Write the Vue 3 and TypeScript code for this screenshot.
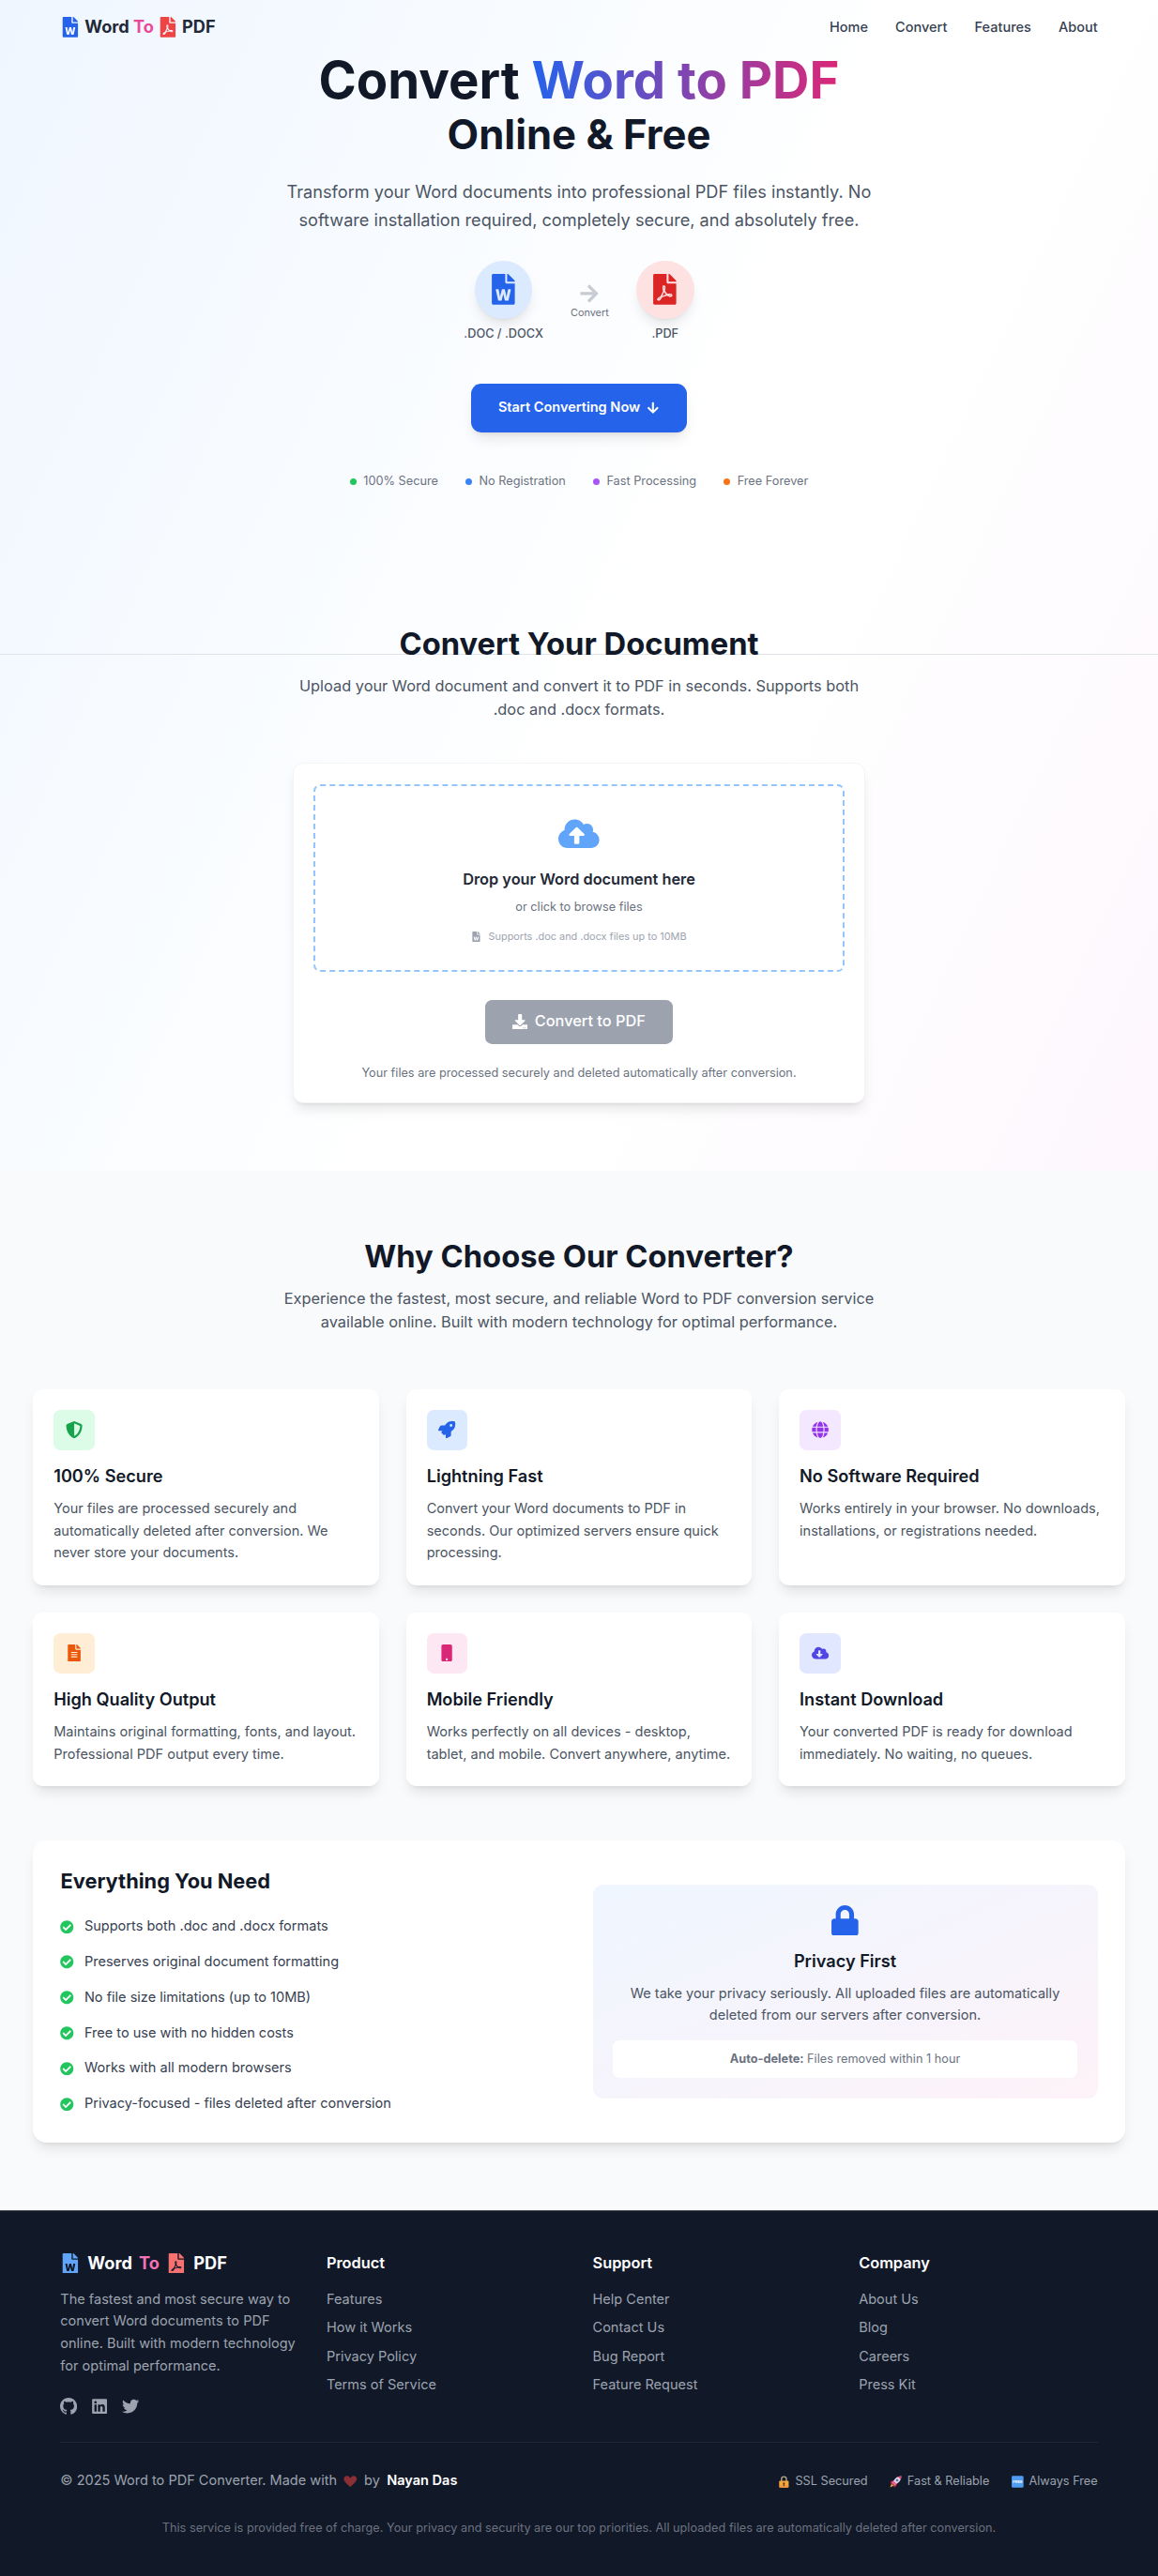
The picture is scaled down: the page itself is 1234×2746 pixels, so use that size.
<script setup lang="ts">
interface Glyph {
  box: string
  d: string
}

interface Feature {
  icon: string
  tone: string
  title: string
  text: string
}

interface LinkGroup {
  title: string
  links: string[]
}

const cloud =
  'M537.6 226.6c4.1-10.7 6.4-22.4 6.4-34.6 0-53-43-96-96-96-19.7 0-38.1 6-53.3 16.2C367 64.2 315.3 32 256 32c-88.4 0-160 71.6-160 160 0 2.7.1 5.4.2 8.1C40.2 219.8 0 273.2 0 336c0 79.5 64.5 144 144 144h368c70.7 0 128-57.3 128-128 0-61.9-44-113.6-102.4-125.4z'

const icons: Record<string, Glyph> = {
  word: {
    box: '0 0 384 512',
    d: 'M224 136V0H24C10.7 0 0 10.7 0 24v464c0 13.3 10.7 24 24 24h336c13.3 0 24-10.7 24-24V160H248c-13.2 0-24-10.8-24-24zm57.1 120H305c7.7 0 13.4 7.1 11.7 14.7l-38 168c-1.2 5.5-6.1 9.3-11.7 9.3h-38c-5.5 0-10.3-3.8-11.6-9.1-25.8-103.5-20.8-81.2-25.6-110.5h-.5c-1.1 14.3-2.4 17.4-25.6 110.5-1.3 5.3-6.1 9.1-11.6 9.1H117c-5.6 0-10.5-3.9-11.7-9.4l-37.8-168c-1.7-7.5 4-14.6 11.7-14.6h24.5c5.7 0 10.7 4 11.8 9.7 15.6 78 20.1 109.5 21 122.2 1.6-10.2 7.3-32.7 29.4-122.7 1.3-5.4 6.1-9.1 11.7-9.1h29.1c5.6 0 10.4 3.8 11.7 9.2 24 100.4 28.8 124 29.6 129.4-.2-11.2-2.6-17.8 21.6-129.2 1-5.6 5.9-9.5 11.5-9.5zM384 121.9v6.1H256V0h6.1c6.4 0 12.5 2.5 17 7l97.9 98c4.5 4.5 7 10.6 7 16.9z',
  },
  pdf: {
    box: '0 0 384 512',
    d: 'M181.9 256.1c-5-16-4.9-46.9-2-46.9 8.4 0 7.6 36.9 2 46.9zm-1.7 47.2c-7.7 20.2-17.3 43.3-28.4 62.7 18.3-7 39-17.2 62.9-21.9-12.7-9.6-24.9-23.4-34.5-40.8zM86.1 428.1c0 .8 13.2-5.4 34.9-40.2-6.7 6.3-29.1 24.5-34.9 40.2zM248 160h136v328c0 13.3-10.7 24-24 24H24c-13.3 0-24-10.7-24-24V24C0 10.7 10.7 0 24 0h200v136c0 13.2 10.8 24 24 24zm-8 171.8c-20-12.2-33.3-29-42.7-53.8 4.5-18.5 11.6-46.6 6.2-64.2-4.7-29.4-42.4-26.5-47.8-6.8-5 18.3-.4 44.1 8.1 77-11.6 27.6-28.7 64.6-40.8 85.8-.1 0-.1.1-.2.1-27.1 13.9-73.6 44.5-54.5 68 5.6 6.9 16 10 21.5 10 17.9 0 35.7-18 61.1-61.8 25.8-8.5 54.1-19.1 79-23.2 21.7 11.8 47.1 19.5 64 19.5 29.2 0 31.2-32 19.7-43.4-13.9-13.6-54.3-9.7-73.6-7.2zM377 105L279 7c-4.5-4.5-10.6-7-17-7h-6v128h128v-6.1c0-6.3-2.5-12.4-7-16.9zm-74.1 255.3c4.1-2.7-2.5-11.9-42.8-9 37.1 15.8 42.8 9 42.8 9z',
  },
  arrowRight: {
    box: '0 0 448 512',
    d: 'M190.5 66.9l22.2-22.2c9.4-9.4 24.6-9.4 33.9 0L441 239c9.4 9.4 9.4 24.6 0 33.9L246.6 467.3c-9.4 9.4-24.6 9.4-33.9 0l-22.2-22.2c-9.5-9.5-9.3-25 .4-34.3L311.4 296H24c-13.3 0-24-10.7-24-24v-32c0-13.3 10.7-24 24-24h287.4L190.9 101.2c-9.8-9.3-10-24.8-.4-34.3z',
  },
  arrowDown: {
    box: '0 0 448 512',
    d: 'M413.1 222.5l22.2 22.2c9.4 9.4 9.4 24.6 0 33.9L241 473c-9.4 9.4-24.6 9.4-33.9 0L12.7 278.6c-9.4-9.4-9.4-24.6 0-33.9l22.2-22.2c9.5-9.5 25-9.3 34.3.4L184 343.4V56c0-13.3 10.7-24 24-24h32c13.3 0 24 10.7 24 24v287.4l114.8-120.5c9.3-9.8 24.8-10 34.3-.4z',
  },
  cloudUp: {
    box: '0 0 640 512',
    d: cloud + 'M393.4 288H328v112c0 8.8-7.2 16-16 16h-48c-8.8 0-16-7.2-16-16V288h-65.4c-14.3 0-21.4-17.2-11.3-27.3l105.4-105.4c6.2-6.2 16.4-6.2 22.6 0l105.4 105.4c10.1 10.1 2.9 27.3-11.3 27.3z',
  },
  cloudDown: {
    box: '0 0 640 512',
    d: cloud + 'm-132.9 88.7L299.3 420.7c-6.2 6.2-16.4 6.2-22.6 0L171.3 315.3c-10.1-10.1-2.9-27.3 11.3-27.3H248V176c0-8.8 7.2-16 16-16h48c8.8 0 16 7.2 16 16v112h65.4c14.2 0 21.4 17.2 11.3 27.3z',
  },
  download: {
    box: '0 0 512 512',
    d: 'M216 0h80c13.3 0 24 10.7 24 24v168h87.7c17.8 0 26.7 21.5 14.1 34.1L269.7 378.3c-7.5 7.5-19.8 7.5-27.3 0L90.1 226.1c-12.6-12.6-3.7-34.1 14.1-34.1H192V24c0-13.3 10.7-24 24-24zm296 376v112c0 13.3-10.7 24-24 24H24c-13.3 0-24-10.7-24-24V376c0-13.3 10.7-24 24-24h146.7l49 49c20.1 20.1 52.5 20.1 72.6 0l49-49H488c13.3 0 24 10.7 24 24zm-124 88c0-11-9-20-20-20s-20 9-20 20 9 20 20 20 20-9 20-20zm64 0c0-11-9-20-20-20s-20 9-20 20 9 20 20 20 20-9 20-20z',
  },
  shield: {
    box: '0 0 512 512',
    d: 'M466.5 83.7l-192-80a48.15 48.15 0 0 0-36.9 0l-192 80C27.7 91.1 16 108.6 16 128c0 198.5 114.5 335.7 221.5 380.3 11.8 4.9 25.1 4.9 36.9 0C360.1 472.6 496 349.3 496 128c0-19.4-11.7-36.9-29.5-44.3zM256.1 446.3l-.1-381 175.9 73.3c-3.3 151.4-82.1 261.1-175.8 307.7z',
  },
  rocket: {
    box: '0 0 512 512',
    d: 'M505.12019,19.09375c-1.18945-5.53125-6.65819-11-12.207-12.1875C460.716,0,435.507,0,410.40747,0,307.17523,0,245.26909,55.20312,199.05238,128H94.83772c-16.34763.01562-35.55658,11.875-42.88664,26.48438L2.51562,253.29688A28.4,28.4,0,0,0,0,264a24.00867,24.00867,0,0,0,24.00582,24H127.81618l-22.47457,22.46875c-11.36521,11.36133-12.99607,32.25781,0,45.25L156.24582,406.625c11.15623,11.1875,32.15619,13.15625,45.27726,0l22.47457-22.46875V488a24.00867,24.00867,0,0,0,24.00581,24,28.55934,28.55934,0,0,0,10.707-2.51562l98.72834-49.39063c14.62888-7.29687,26.50776-26.5,26.50776-42.85937V312.79688c72.59753-46.3125,128.03493-108.40626,128.03493-211.09376C512.07526,76.5,512.07526,51.29688,505.12019,19.09375ZM384.04033,168A40,40,0,1,1,424.05,128,40.02322,40.02322,0,0,1,384.04033,168Z',
  },
  globe: {
    box: '0 0 496 512',
    d: 'M336.5 160C322 70.7 287.8 8 248 8s-74 62.7-88.5 152h177zM152 256c0 22.2 1.2 43.5 3.3 64h185.3c2.1-20.5 3.3-41.8 3.3-64s-1.2-43.5-3.3-64H155.3c-2.1 20.5-3.3 41.8-3.3 64zm324.7-96c-28.6-67.9-86.5-120.4-158-141.6 24.4 33.8 41.2 84.7 50 141.6h108zM177.2 18.4C105.8 39.6 47.8 92.1 19.3 160h108c8.7-56.9 25.5-107.8 49.9-141.6zM487.4 192H372.7c2.1 21 3.3 42.5 3.3 64s-1.2 43-3.3 64h114.6c5.5-20.5 8.6-41.8 8.6-64s-3.1-43.5-8.5-64zM120 256c0-21.5 1.2-43 3.3-64H8.6C3.2 212.5 0 233.8 0 256s3.2 43.5 8.6 64h114.6c-2-21-3.2-42.5-3.2-64zm39.5 96c14.5 89.3 48.7 152 88.5 152s74-62.7 88.5-152h-177zm159.3 141.6c71.4-21.2 129.4-73.7 158-141.6h-108c-8.8 56.9-25.6 107.8-50 141.6zM19.3 352c28.6 67.9 86.5 120.4 158 141.6-24.4-33.8-41.2-84.7-50-141.6h-108z',
  },
  file: {
    box: '0 0 384 512',
    d: 'M224 136V0H24C10.7 0 0 10.7 0 24v464c0 13.3 10.7 24 24 24h336c13.3 0 24-10.7 24-24V160H248c-13.2 0-24-10.8-24-24zm64 236c0 6.6-5.4 12-12 12H108c-6.6 0-12-5.4-12-12v-8c0-6.6 5.4-12 12-12h168c6.6 0 12 5.4 12 12v8zm0-64c0 6.6-5.4 12-12 12H108c-6.6 0-12-5.4-12-12v-8c0-6.6 5.4-12 12-12h168c6.6 0 12 5.4 12 12v8zm0-72v8c0 6.6-5.4 12-12 12H108c-6.6 0-12-5.4-12-12v-8c0-6.6 5.4-12 12-12h168c6.6 0 12 5.4 12 12zm96-114.1v6.1H256V0h6.1c6.4 0 12.5 2.5 17 7l97.9 98c4.5 4.5 7 10.6 7 16.9z',
  },
  mobile: {
    box: '0 0 320 512',
    d: 'M272 0H48C21.5 0 0 21.5 0 48v416c0 26.5 21.5 48 48 48h224c26.5 0 48-21.5 48-48V48c0-26.5-21.5-48-48-48zM160 480c-17.7 0-32-14.3-32-32s14.3-32 32-32 32 14.3 32 32-14.3 32-32 32z',
  },
  check: {
    box: '0 0 512 512',
    d: 'M504 256c0 136.967-111.033 248-248 248S8 392.967 8 256 119.033 8 256 8s248 111.033 248 248zM227.314 387.314l184-184c6.248-6.248 6.248-16.379 0-22.627l-22.627-22.627c-6.248-6.249-16.379-6.249-22.628 0L216 308.118l-70.059-70.059c-6.248-6.248-16.379-6.248-22.628 0l-22.627 22.627c-6.248 6.248-6.248 16.379 0 22.627l104 104c6.249 6.249 16.379 6.249 22.628.001z',
  },
  lock: {
    box: '0 0 448 512',
    d: 'M400 224h-24v-72C376 68.2 307.8 0 224 0S72 68.2 72 152v72H48c-26.5 0-48 21.5-48 48v192c0 26.5 21.5 48 48 48h352c26.5 0 48-21.5 48-48V272c0-26.5-21.5-48-48-48zm-104 0H152v-72c0-39.7 32.3-72 72-72s72 32.3 72 72v72z',
  },
  github: {
    box: '0 0 16 16',
    d: 'M8 0C3.58 0 0 3.58 0 8c0 3.54 2.29 6.53 5.47 7.59.4.07.55-.17.55-.38 0-.19-.01-.82-.01-1.49-2.01.37-2.53-.49-2.69-.94-.09-.23-.48-.94-.82-1.13-.28-.15-.68-.52-.01-.53.63-.01 1.08.58 1.23.82.72 1.21 1.87.87 2.33.66.07-.52.28-.87.51-1.07-1.78-.2-3.64-.89-3.64-3.95 0-.87.31-1.59.82-2.15-.08-.2-.36-1.02.08-2.12 0 0 .67-.21 2.2.82.64-.18 1.32-.27 2-.27.68 0 1.36.09 2 .27 1.53-1.04 2.2-.82 2.2-.82.44 1.1.16 1.92.08 2.12.51.56.82 1.27.82 2.15 0 3.07-1.87 3.75-3.65 3.95.29.25.54.73.54 1.48 0 1.07-.01 1.93-.01 2.2 0 .21.15.46.55.38A8.013 8.013 0 0 0 16 8c0-4.42-3.58-8-8-8z',
  },
  linkedin: {
    box: '0 0 448 512',
    d: 'M416 32H31.9C14.3 32 0 46.5 0 64.3v383.4C0 465.5 14.3 480 31.9 480H416c17.6 0 32-14.5 32-32.3V64.3c0-17.8-14.4-32.3-32-32.3zM135.4 416H69V202.2h66.5V416zm-33.2-243c-21.3 0-38.5-17.3-38.5-38.5S80.9 96 102.2 96c21.2 0 38.5 17.3 38.5 38.5 0 21.3-17.2 38.5-38.5 38.5zm282.1 243h-66.4V312c0-24.8-.5-56.7-34.5-56.7-34.6 0-39.9 27-39.9 54.9V416h-66.4V202.2h63.7v29.2h.9c8.9-16.8 30.6-34.5 62.9-34.5 67.2 0 79.7 44.3 79.7 101.9V416z',
  },
  twitter: {
    box: '0 0 512 512',
    d: 'M459.37 151.716c.325 4.548.325 9.097.325 13.645 0 138.72-105.583 298.558-298.558 298.558-59.452 0-114.68-17.219-161.137-47.106 8.447.974 16.568 1.299 25.34 1.299 49.055 0 94.213-16.568 130.274-44.832-46.132-.975-84.792-31.188-98.112-72.772 6.498.974 12.995 1.624 19.818 1.624 9.421 0 18.843-1.3 27.614-3.573-48.081-9.747-84.143-51.98-84.143-102.985v-1.299c13.969 7.797 30.214 12.67 47.431 13.319-28.264-18.843-46.781-51.005-46.781-87.391 0-19.492 5.197-37.36 14.294-52.954 51.655 63.675 129.3 105.258 216.365 109.807-1.624-7.797-2.599-15.918-2.599-24.04 0-57.828 46.782-104.934 104.934-104.934 30.213 0 57.502 12.67 76.67 33.137 23.715-4.548 46.456-13.32 66.599-25.34-7.798 24.366-24.366 44.833-46.132 57.827 21.117-2.273 41.584-8.122 60.426-16.243-14.292 20.791-32.161 39.308-52.628 54.253z',
  },
}

const nav: string[] = ['Home', 'Convert', 'Features', 'About']

const perks = [
  { label: '100% Secure', tone: 'green' },
  { label: 'No Registration', tone: 'blue' },
  { label: 'Fast Processing', tone: 'purple' },
  { label: 'Free Forever', tone: 'orange' },
]

const features: Feature[] = [
  { icon: 'shield', tone: 'green', title: '100% Secure', text: 'Your files are processed securely and automatically deleted after conversion. We never store your documents.' },
  { icon: 'rocket', tone: 'blue', title: 'Lightning Fast', text: 'Convert your Word documents to PDF in seconds. Our optimized servers ensure quick processing.' },
  { icon: 'globe', tone: 'purple', title: 'No Software Required', text: 'Works entirely in your browser. No downloads, installations, or registrations needed.' },
  { icon: 'file', tone: 'orange', title: 'High Quality Output', text: 'Maintains original formatting, fonts, and layout. Professional PDF output every time.' },
  { icon: 'mobile', tone: 'pink', title: 'Mobile Friendly', text: 'Works perfectly on all devices - desktop, tablet, and mobile. Convert anywhere, anytime.' },
  { icon: 'cloudDown', tone: 'indigo', title: 'Instant Download', text: 'Your converted PDF is ready for download immediately. No waiting, no queues.' },
]

const checklist: string[] = [
  'Supports both .doc and .docx formats',
  'Preserves original document formatting',
  'No file size limitations (up to 10MB)',
  'Free to use with no hidden costs',
  'Works with all modern browsers',
  'Privacy-focused - files deleted after conversion',
]

const groups: LinkGroup[] = [
  { title: 'Product', links: ['Features', 'How it Works', 'Privacy Policy', 'Terms of Service'] },
  { title: 'Support', links: ['Help Center', 'Contact Us', 'Bug Report', 'Feature Request'] },
  { title: 'Company', links: ['About Us', 'Blog', 'Careers', 'Press Kit'] },
]

const socials: string[] = ['github', 'linkedin', 'twitter']
</script>

<template>
  <div class="page">
    <div class="top">
      <div class="fold" aria-hidden="true"></div>

      <header class="nav">
        <div class="logo">
          <svg class="ico c-blue" :viewBox="icons.word.box"><path :d="icons.word.d" /></svg>
          <span>Word</span>
          <span class="c-pink">To</span>
          <svg class="ico c-red" :viewBox="icons.pdf.box"><path :d="icons.pdf.d" /></svg>
          <span>PDF</span>
        </div>
        <nav class="menu">
          <a v-for="item in nav" :key="item">{{ item }}</a>
        </nav>
      </header>

      <section class="hero">
        <h1>Convert <span class="grad">Word to PDF</span><span class="sub">Online &amp; Free</span></h1>
        <p class="lead">Transform your Word documents into professional PDF files instantly. No software installation required, completely secure, and absolutely free.</p>

        <div class="flow">
          <div class="stage">
            <div class="disc disc-word"><svg class="ico" :viewBox="icons.word.box"><path :d="icons.word.d" /></svg></div>
            <span class="stage-label">.DOC / .DOCX</span>
          </div>
          <div class="step">
            <svg class="ico" :viewBox="icons.arrowRight.box"><path :d="icons.arrowRight.d" /></svg>
            <span>Convert</span>
          </div>
          <div class="stage">
            <div class="disc disc-pdf"><svg class="ico" :viewBox="icons.pdf.box"><path :d="icons.pdf.d" /></svg></div>
            <span class="stage-label">.PDF</span>
          </div>
        </div>

        <button class="cta">
          Start Converting Now
          <svg class="ico" :viewBox="icons.arrowDown.box"><path :d="icons.arrowDown.d" /></svg>
        </button>

        <ul class="perks">
          <li v-for="p in perks" :key="p.label"><i :class="['dot', 'dot-' + p.tone]"></i>{{ p.label }}</li>
        </ul>
      </section>

      <section class="convert">
        <h2>Convert Your Document</h2>
        <p class="intro">Upload your Word document and convert it to PDF in seconds. Supports both .doc and .docx formats.</p>
        <div class="uploader">
          <div class="drop">
            <svg class="ico drop-cloud" :viewBox="icons.cloudUp.box"><path :d="icons.cloudUp.d" /></svg>
            <h3>Drop your Word document here</h3>
            <p class="browse">or click to browse files</p>
            <p class="limits">
              <svg class="ico" :viewBox="icons.word.box"><path :d="icons.word.d" /></svg>
              <span>Supports .doc and .docx files up to 10MB</span>
            </p>
          </div>
          <button class="go">
            <svg class="ico" :viewBox="icons.download.box"><path :d="icons.download.d" /></svg>
            Convert to PDF
          </button>
          <p class="note">Your files are processed securely and deleted automatically after conversion.</p>
        </div>
      </section>
    </div>

    <section class="features">
      <h2>Why Choose Our Converter?</h2>
      <p class="intro intro-wide">Experience the fastest, most secure, and reliable Word to PDF conversion service available online. Built with modern technology for optimal performance.</p>

      <div class="cards">
        <article v-for="f in features" :key="f.title" class="card">
          <div :class="['tile', 'tile-' + f.tone]">
            <svg class="ico" :viewBox="icons[f.icon].box"><path :d="icons[f.icon].d" /></svg>
          </div>
          <h3>{{ f.title }}</h3>
          <p>{{ f.text }}</p>
        </article>
      </div>

      <div class="panel">
        <div>
          <h3 class="panel-title">Everything You Need</h3>
          <ul class="checks">
            <li v-for="c in checklist" :key="c">
              <svg class="ico" :viewBox="icons.check.box"><path :d="icons.check.d" /></svg>{{ c }}
            </li>
          </ul>
        </div>
        <div class="privacy">
          <svg class="ico" :viewBox="icons.lock.box"><path :d="icons.lock.d" /></svg>
          <h4>Privacy First</h4>
          <p>We take your privacy seriously. All uploaded files are automatically deleted from our servers after conversion.</p>
          <div class="auto"><strong>Auto-delete:</strong> Files removed within 1 hour</div>
        </div>
      </div>
    </section>

    <footer class="footer">
      <div class="foot-grid">
        <div>
          <div class="logo foot-logo">
            <svg class="ico c-blue-l" :viewBox="icons.word.box"><path :d="icons.word.d" /></svg>
            <span>Word</span>
            <span class="c-pink-l">To</span>
            <svg class="ico c-red-l" :viewBox="icons.pdf.box"><path :d="icons.pdf.d" /></svg>
            <span>PDF</span>
          </div>
          <p class="about">The fastest and most secure way to convert Word documents to PDF online. Built with modern technology for optimal performance.</p>
          <div class="socials">
            <svg v-for="s in socials" :key="s" class="ico" :viewBox="icons[s].box"><path :d="icons[s].d" /></svg>
          </div>
        </div>
        <div v-for="g in groups" :key="g.title">
          <h4>{{ g.title }}</h4>
          <ul class="links">
            <li v-for="l in g.links" :key="l">{{ l }}</li>
          </ul>
        </div>
      </div>

      <div class="legal">
        <div class="made">
          <span>© 2025 Word to PDF Converter. Made with</span>
          <svg class="heart" viewBox="0 0 16 14"><path d="M8 13.8C6.6 11.2.4 7.8.4 3.9.4 1.8 2 .3 4 .3c1.800 0 3.200 1 4 2.700C8.800 1.300 10.200.3 12 .3c2 0 3.600 1.500 3.600 3.600 0 3.900-6.200 7.300-7.600 9.900z" /></svg>
          <span>by</span>
          <strong>Nayan Das</strong>
        </div>
        <div class="badges">
          <span>
            <svg class="emoji" viewBox="0 0 16 16">
              <path d="M4.800 8V4.600a3.200 3.200 0 0 1 6.400 0V8" fill="none" stroke="#b9a58c" stroke-width="1.700" />
              <rect x="1.800" y="6.600" width="12.400" height="8.900" rx="1.300" fill="#f5a83c" />
              <rect x="1.800" y="12.800" width="12.400" height="2.700" rx="1.300" fill="#ee9440" />
              <path d="M8 8.800a1.400 1.400 0 0 1 .8 2.500v2.200H7.200v-2.200A1.400 1.400 0 0 1 8 8.800z" fill="#5d3a1c" />
            </svg>
            SSL Secured
          </span>
          <span>
            <svg class="emoji" viewBox="0 0 16 16">
              <path d="M2.800 10.500L.7 15.300l4.800-2.100z" fill="#f4a13a" />
              <path d="M6 6.300L2.500 7.200.8 10.400l3.600-.2zM9.700 10l-.9 3.500-3.200 1.700.2-3.600z" fill="#e0315f" />
              <path d="M15.500.5c-4.800.1-7.900 2.300-10.200 6.200L3.600 10l2.400 2.400 3.300-1.700c3.900-2.300 6.100-5.400 6.200-10.200z" fill="#d9d3e8" />
              <path d="M5.300 6.700L3.600 10l2.400 2.400 3.300-1.700z" fill="#ee5c86" />
              <path d="M15.500.5c-1.800 0-3.200.3-4.500.9L14.600 5c.6-1.300.9-2.700.9-4.500z" fill="#e8416e" />
              <circle cx="10" cy="6" r="1.500" fill="#5b6b9c" />
            </svg>
            Fast &amp; Reliable
          </span>
          <span>
            <svg class="emoji" viewBox="0 0 16 16">
              <rect x="0.300" y="0.300" width="15.400" height="15.400" rx="1.500" fill="#4f9df0" />
              <text x="8" y="10" class="free">FREE</text>
            </svg>
            Always Free
          </span>
        </div>
      </div>
      <p class="fine">This service is provided free of charge. Your privacy and security are our top priorities. All uploaded files are automatically deleted after conversion.</p>
    </footer>
  </div>
</template>

<style>
html {
  font-size: 14.54px;
}
body {
  margin: 0;
}
</style>

<style scoped>
.page {
  font-family: Inter, 'Liberation Sans', sans-serif;
  font-size: 1rem;
  line-height: 1.6;
  color: #111827;
  background: #f9fafb;
  overflow: hidden;
}
h1, h2, h3, h4, p, ul {
  margin: 0;
  padding: 0;
}
ul {
  list-style: none;
}
button {
  border: 0;
  font-family: inherit;
  line-height: inherit;
}
.ico {
  display: block;
  width: 1em;
  height: 1em;
  flex: none;
  fill: currentColor;
}

.top {
  position: relative;
  background: linear-gradient(115deg, #eff6ff 0%, #ffffff 55%, #ffffff 65%, #fdf7fd 100%);
}
/* hairline at the first viewport's edge, behind the heading */
.fold {
  position: absolute;
  left: 0;
  right: 0;
  top: 697px;
  height: 1px;
  background: #e0e4e9;
}
.nav {
  display: flex;
  align-items: center;
  justify-content: space-between;
  height: 52.8px;
  padding: 5.6px 64.3px 0;
  box-sizing: border-box;
}
.logo {
  display: flex;
  align-items: center;
  gap: 0.29rem;
  font-size: 1.25rem;
  line-height: 1.75rem;
  font-weight: 700;
  color: #1f2937;
}
.logo .ico {
  font-size: 1.5rem;
}
.c-blue { color: #2563eb; }
.c-pink { color: #ec4899; }
.c-red { color: #ef4444; }
.c-blue-l { color: #60a5fa; }
.c-pink-l { color: #f472b6; }
.c-red-l { color: #f87171; }
.menu {
  display: flex;
  gap: 2rem;
  font-weight: 500;
  color: #374151;
}

.hero {
  display: flex;
  flex-direction: column;
  align-items: center;
  text-align: center;
  padding-bottom: 5rem;
}
h1 {
  font-size: 3.75rem;
  line-height: 1.2;
  font-weight: 700;
}
.grad {
  background: linear-gradient(to right, #2563eb, #db2777);
  -webkit-background-clip: text;
  background-clip: text;
  color: transparent;
}
.sub {
  display: block;
  font-size: 3rem;
}
.lead {
  width: 45rem;
  margin-top: 1.25rem;
  font-size: 1.25rem;
  line-height: 2.080rem;
  color: #4b5563;
}
.flow {
  display: flex;
  align-items: center;
  gap: 2rem;
  margin-top: 1.96rem;
}
.stage {
  display: flex;
  flex-direction: column;
  align-items: center;
  gap: 0.5rem;
}
.disc {
  padding: 1rem;
  border-radius: 50%;
  font-size: 2.25rem;
  box-shadow: 0 9px 13.500px -3px rgba(0, 0, 0, 0.1), 0 3.500px 5.500px -4px rgba(0, 0, 0, 0.1);
}
.disc-word { background: #dbeafe; color: #2563eb; }
.disc-pdf { background: #fee2e2; color: #dc2626; }
.stage-label {
  font-size: 0.875rem;
  line-height: 1.25rem;
  font-weight: 500;
  color: #4b5563;
}
.step {
  display: flex;
  flex-direction: column;
  align-items: center;
  font-size: 0.75rem;
  line-height: 1rem;
  color: #6b7280;
  gap: 0.15rem;
}
.step .ico {
  font-size: 1.5rem;
  color: #c8cbd1;
}
.cta {
  display: flex;
  align-items: center;
  gap: 0.5rem;
  margin-top: 3rem;
  padding: 1rem 2rem;
  border-radius: 0.75rem;
  background: #2563eb;
  color: #fff;
  font-size: 1rem;
  font-weight: 600;
  box-shadow: 0 9px 13.500px -3px rgba(0, 0, 0, 0.1), 0 3.500px 5.500px -4px rgba(0, 0, 0, 0.1);
}
.cta .ico {
  font-size: 0.9375rem;
}
.perks {
  display: flex;
  gap: 2rem;
  margin-top: 3rem;
  font-size: 0.875rem;
  line-height: 1.25rem;
  color: #6b7280;
}
.perks li {
  display: flex;
  align-items: center;
  gap: 0.5rem;
}
.dot {
  width: 0.5rem;
  height: 0.5rem;
  border-radius: 50%;
}
.dot-green { background: #22c55e; }
.dot-blue { background: #3b82f6; }
.dot-purple { background: #a855f7; }
.dot-orange { background: #f97316; }

.convert, .features {
  position: relative;
  display: flex;
  flex-direction: column;
  align-items: center;
  text-align: center;
  padding: 5rem 0;
}
h2 {
  font-size: 2.25rem;
  line-height: 2.5rem;
  font-weight: 700;
}
.intro {
  width: 42rem;
  margin-top: 1rem;
  font-size: 1.125rem;
  line-height: 1.75rem;
  color: #4b5563;
}
.intro-wide {
  width: 48rem;
}
.uploader {
  box-sizing: border-box;
  width: 42rem;
  margin-top: 3rem;
  padding: 1.5rem;
  border: 1px solid #f3f4f6;
  border-radius: 0.75rem;
  background: #fff;
  display: flex;
  flex-direction: column;
  align-items: center;
  box-shadow: 0 9px 13.500px -3px rgba(0, 0, 0, 0.1), 0 3.500px 5.500px -4px rgba(0, 0, 0, 0.1);
}
.drop {
  align-self: stretch;
  display: flex;
  flex-direction: column;
  align-items: center;
  padding: 2rem;
  border: 2px dashed #93c5fd;
  border-radius: 0.5rem;
}
.drop-cloud {
  font-size: 3rem;
  color: #60a5fa;
}
.drop h3 {
  margin-top: 1rem;
  font-size: 1.125rem;
  line-height: 1.75rem;
  font-weight: 600;
  color: #1f2937;
}
.browse {
  margin-top: 0.5rem;
  font-size: 0.875rem;
  line-height: 1.25rem;
  color: #6b7280;
}
.limits {
  display: flex;
  align-items: center;
  gap: 0.5rem;
  margin-top: 1rem;
  font-size: 0.75rem;
  line-height: 1rem;
  color: #9ca3af;
}
.go {
  display: flex;
  align-items: center;
  gap: 0.5rem;
  margin-top: 2rem;
  padding: 0.75rem 2rem;
  border-radius: 0.5rem;
  background: #9ca3af;
  color: #fff;
  font-size: 1.125rem;
  line-height: 1.75rem;
  font-weight: 500;
}
.note {
  margin-top: 1.5rem;
  font-size: 0.875rem;
  line-height: 1.25rem;
  color: #6b7280;
}

.cards {
  display: grid;
  grid-template-columns: repeat(3, 1fr);
  gap: 2rem;
  width: 80rem;
  margin-top: 4rem;
  text-align: left;
}
.card {
  padding: 1.5rem;
  border-radius: 0.75rem;
  background: #fff;
  box-shadow: 0 9px 13.500px -3px rgba(0, 0, 0, 0.1), 0 3.500px 5.500px -4px rgba(0, 0, 0, 0.1);
}
.tile {
  display: flex;
  align-items: center;
  justify-content: center;
  width: 3rem;
  height: 3rem;
  border-radius: 0.5rem;
  font-size: 1.25rem;
}
.tile-green { background: #dcfce7; color: #16a34a; }
.tile-blue { background: #dbeafe; color: #2563eb; }
.tile-purple { background: #f3e8ff; color: #9333ea; }
.tile-orange { background: #ffedd5; color: #ea580c; }
.tile-pink { background: #fce7f3; color: #db2777; }
.tile-indigo { background: #e0e7ff; color: #4f46e5; }
.card h3 {
  margin-top: 1rem;
  font-size: 1.25rem;
  line-height: 1.75rem;
  font-weight: 600;
}
.card p {
  margin-top: 0.75rem;
  line-height: 1.625;
  color: #4b5563;
}
.panel {
  box-sizing: border-box;
  display: grid;
  grid-template-columns: 1fr 1fr;
  gap: 2rem;
  align-items: center;
  width: 80rem;
  margin-top: 4rem;
  padding: 2rem;
  border-radius: 1rem;
  background: #fff;
  text-align: left;
  box-shadow: 0 9px 13.500px -3px rgba(0, 0, 0, 0.1), 0 3.500px 5.500px -4px rgba(0, 0, 0, 0.1);
}
.panel-title {
  font-size: 1.5rem;
  line-height: 2rem;
  font-weight: 700;
}
.checks {
  display: flex;
  flex-direction: column;
  gap: 1rem;
  margin-top: 1.5rem;
  color: #374151;
}
.checks li {
  display: flex;
  align-items: center;
  gap: 0.75rem;
}
.checks .ico {
  color: #22c55e;
}
.privacy {
  display: flex;
  flex-direction: column;
  align-items: center;
  padding: 1.5rem;
  border-radius: 0.75rem;
  text-align: center;
  background: linear-gradient(to bottom right, #eff6ff, #fdf2f8);
}
.privacy > .ico {
  font-size: 2.25rem;
  color: #2563eb;
}
.privacy h4 {
  margin-top: 1rem;
  font-size: 1.25rem;
  line-height: 1.75rem;
  font-weight: 600;
}
.privacy p {
  margin-top: 0.75rem;
  color: #4b5563;
}
.auto {
  box-sizing: border-box;
  width: 100%;
  margin-top: 1rem;
  padding: 0.75rem;
  border-radius: 0.5rem;
  background: #fff;
  font-size: 0.875rem;
  line-height: 1.25rem;
  color: #6b7280;
}

.footer {
  padding: 3rem 64.3px 2.920rem;
  background: #111827;
  color: #9ca3af;
  box-shadow: inset 0 1px 0 #4b515d;
}
.foot-grid {
  display: grid;
  grid-template-columns: repeat(4, 1fr);
  gap: 2rem;
}
.foot-logo {
  gap: 0.5rem;
  color: #fff;
}
.about {
  margin-top: 1rem;
  line-height: 1.625;
}
.socials {
  display: flex;
  gap: 1rem;
  margin-top: 1.5rem;
  font-size: 1.25rem;
}
.footer h4 {
  font-size: 1.125rem;
  line-height: 1.75rem;
  font-weight: 600;
  color: #fff;
}
.links {
  display: flex;
  flex-direction: column;
  gap: 0.5rem;
  margin-top: 1rem;
}
.legal {
  display: flex;
  align-items: center;
  justify-content: space-between;
  margin-top: 2rem;
  padding-top: 2rem;
  border-top: 1px solid #1f2937;
}
.made {
  display: flex;
  align-items: center;
  gap: 0.5rem;
}
.made strong {
  font-weight: 600;
  color: #fff;
}
.heart {
  width: 1rem;
  height: 0.875rem;
  fill: #8b2f37;
}
.badges {
  display: flex;
  gap: 1.5rem;
  font-size: 0.875rem;
  line-height: 1.25rem;
}
.badges span {
  display: flex;
  align-items: center;
  gap: 0.25rem;
}
.emoji {
  width: 1.15rem;
  height: 0.9rem;
}
.free {
  font-size: 5px;
  font-weight: 700;
  fill: #fff;
  text-anchor: middle;
}
.fine {
  margin-top: 2rem;
  font-size: 0.875rem;
  line-height: 1.25rem;
  text-align: center;
  color: #6b7280;
}
</style>
